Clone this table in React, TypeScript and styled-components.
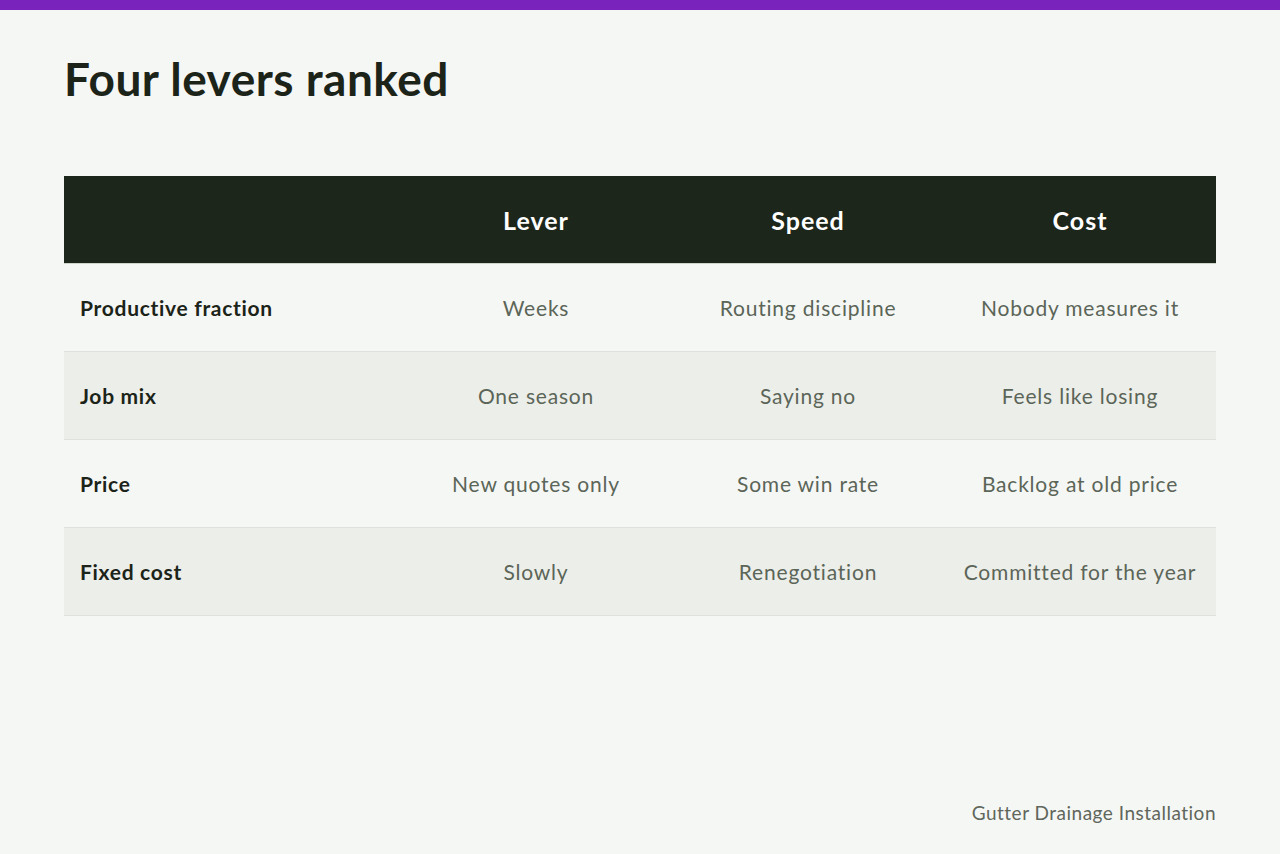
import React from 'react';
import styled, { createGlobalStyle } from 'styled-components';

const GlobalStyle = createGlobalStyle`
  html, body {
    margin: 0;
    padding: 0;
    background: #f5f7f4;
  }
  body {
    font-family: Lato, "Noto Sans", "Liberation Sans", sans-serif;
  }
`;

const Page = styled.div`
  width: 1280px;
  height: 854px;
  display: flex;
  flex-direction: column;
  background: #f5f7f4;
  overflow: hidden;
`;

const TopBar = styled.div`
  height: 10px;
  background: #7a22bc;
  flex-shrink: 0;
`;

const Content = styled.div`
  flex: 1;
  display: flex;
  flex-direction: column;
  padding: 0 64px;
`;

const Title = styled.h1`
  margin: 43px 0 0;
  font-size: 46px;
  line-height: 52px;
  font-weight: 700;
  color: #1c2419;
  letter-spacing: 0.5px;
`;

const Table = styled.div`
  margin-top: 71px;
  display: grid;
  grid-template-columns: 336px repeat(3, 272px);
`;

const Row = styled.div<{ $shade?: boolean }>`
  display: contents;
  & > div {
    background: ${(p) => (p.$shade ? '#eceee9' : '#f5f7f4')};
  }
`;

const HeadCell = styled.div`
  height: 88px;
  display: flex;
  align-items: center;
  justify-content: center;
  background: #1d261b;
  color: #ffffff;
  font-size: 25px;
  font-weight: 700;
  letter-spacing: 1px;
  border-bottom: 1px solid #cfd3cc;
  box-sizing: border-box;
`;

const Cell = styled.div<{ $label?: boolean }>`
  height: 88px;
  display: flex;
  align-items: center;
  justify-content: ${(p) => (p.$label ? 'flex-start' : 'center')};
  padding: ${(p) => (p.$label ? '0 16px' : '0')};
  box-sizing: border-box;
  border-bottom: 1px solid #dfe2dc;
  font-size: 21px;
  letter-spacing: ${(p) => (p.$label ? '0.7px' : '0.8px')};
  font-weight: ${(p) => (p.$label ? 700 : 400)};
  color: ${(p) => (p.$label ? '#1c2419' : '#5b6558')};
`;

const Footer = styled.div`
  margin-top: auto;
  margin-bottom: 30px;
  text-align: right;
  font-size: 19px;
  letter-spacing: 0.5px;
  color: #5f665c;
`;

const rows = [
  ['Productive fraction', 'Weeks', 'Routing discipline', 'Nobody measures it'],
  ['Job mix', 'One season', 'Saying no', 'Feels like losing'],
  ['Price', 'New quotes only', 'Some win rate', 'Backlog at old price'],
  ['Fixed cost', 'Slowly', 'Renegotiation', 'Committed for the year'],
];

const App: React.FC = () => (
  <Page>
    <GlobalStyle />
    <TopBar />
    <Content>
      <Title>Four levers ranked</Title>
      <Table>
        <HeadCell />
        <HeadCell>Lever</HeadCell>
        <HeadCell>Speed</HeadCell>
        <HeadCell>Cost</HeadCell>
        {rows.map((r, i) => (
          <Row key={r[0]} $shade={i % 2 === 1}>
            <Cell $label>{r[0]}</Cell>
            <Cell>{r[1]}</Cell>
            <Cell>{r[2]}</Cell>
            <Cell>{r[3]}</Cell>
          </Row>
        ))}
      </Table>
      <Footer>Gutter Drainage Installation</Footer>
    </Content>
  </Page>
);

export default App;
